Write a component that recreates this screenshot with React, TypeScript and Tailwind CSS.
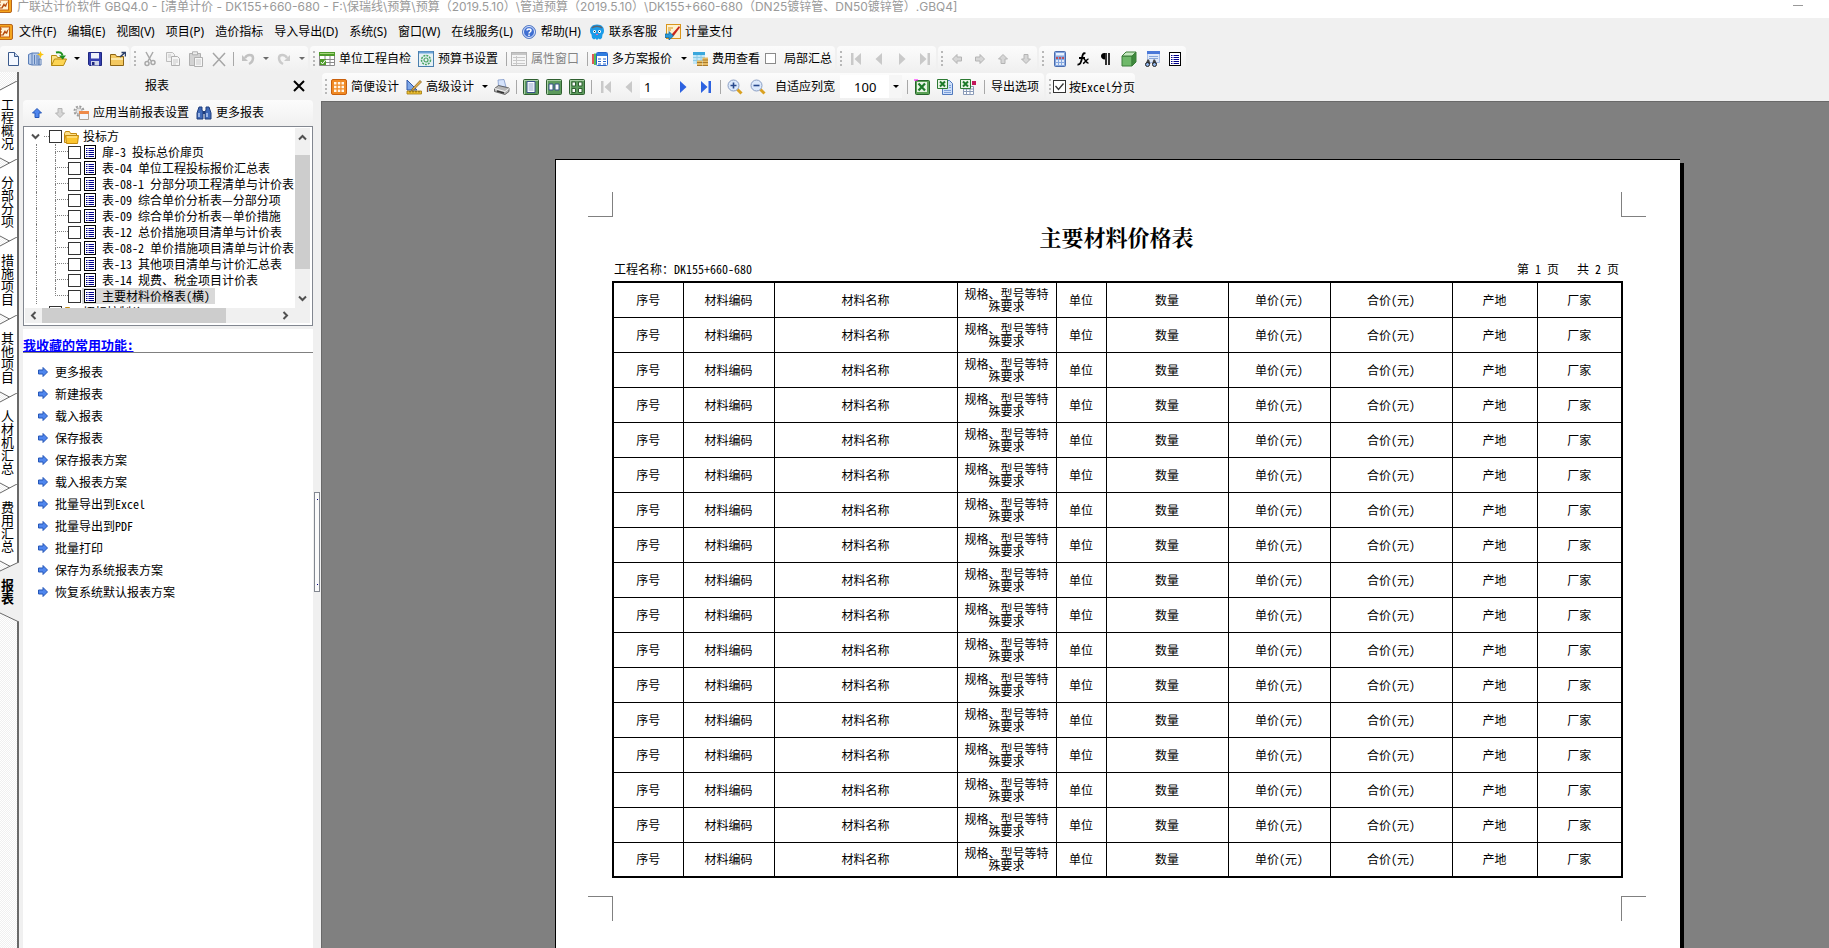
import React from 'react';

const MENUS = ['文件(F)', '编辑(E)', '视图(V)', '项目(P)', '造价指标', '导入导出(D)', '系统(S)', '窗口(W)', '在线服务(L)'];

const TABS = ['工程概况', '分部分项', '措施项目', '其他项目', '人材机汇总', '费用汇总', '报表'];

const REPORTS = [
  '扉-3 投标总价扉页',
  '表-04 单位工程投标报价汇总表',
  '表-08-1 分部分项工程清单与计价表',
  '表-09 综合单价分析表—分部分项',
  '表-09 综合单价分析表—单价措施',
  '表-12 总价措施项目清单与计价表',
  '表-08-2 单价措施项目清单与计价表',
  '表-13 其他项目清单与计价汇总表',
  '表-14 规费、税金项目计价表',
  '主要材料价格表(横)',
];

const FAVORITES = [
  '更多报表',
  '新建报表',
  '载入报表',
  '保存报表',
  '保存报表方案',
  '载入报表方案',
  '批量导出到Excel',
  '批量导出到PDF',
  '批量打印',
  '保存为系统报表方案',
  '恢复系统默认报表方案',
];

const COLUMNS = [
  { title: '序号', width: 70 },
  { title: '材料编码', width: 91 },
  { title: '材料名称', width: 183 },
  { title: '规格、型号等特殊要求', width: 99 },
  { title: '单位', width: 50 },
  { title: '数量', width: 122 },
  { title: '单价(元)', width: 102 },
  { title: '合价(元)', width: 122 },
  { title: '产地', width: 85 },
  { title: '厂家', width: 85 },
];

const BODY_ROWS = 16;

/* ---------- icons, all on a 16 x 16 grid ---------- */

const Svg: React.FC<{ children: React.ReactNode }> = ({ children }) => (
  <svg width="16" height="16" viewBox="0 0 16 16" className="block shrink-0" fill="none" aria-hidden="true">
    {children}
  </svg>
);

const AppIcon = () => (
  <Svg>
    <rect x="0.5" y="0.5" width="15" height="15" rx="1.5" fill="#f5a51d" stroke="#b5651d" />
    <rect x="3.500" y="3" width="9" height="10" fill="#fff3d6" stroke="#c8600a" />
    <path d="M5 11 8 6l1 2 3-4-2 6-2-1-2 3z" fill="#b5480a" />
    <path d="M2 5h3M2 8h3M2 11h3" stroke="#b5480a" />
  </Svg>
);

const NewIcon = () => (
  <Svg>
    <path d="M3.500 1.500h6l4 4v9h-10z" fill="#f4f8ff" stroke="#3b5a8c" />
    <path d="M9.500 1.500v4h4" fill="#c9d8f0" stroke="#3b5a8c" />
  </Svg>
);

const NewBookIcon = () => (
  <Svg>
    <path d="M.5 3.500 4 2h7v12H4L.5 13z" fill="#b7cbea" stroke="#5a7fb8" />
    <path d="M4 2v12M6.500 4v9M9 4v9M11 8h2v6h-2z" stroke="#5a7fb8" />
    <path d="m12.500 0 1 2.500L16 3.500l-2.500 1-1 3-1-3-2.500-1 2.500-1z" fill="#f9c413" />
  </Svg>
);

const OpenIcon = () => (
  <Svg>
    <path d="M.5 14.500v-10h5l1 2h6v2" fill="#fbe28a" stroke="#b58a12" />
    <path d="m.5 14.500 3-6.500h12l-3 6.500z" fill="#fdd554" stroke="#b58a12" />
    <path d="M5 1.500c4-1 6 .5 6.500 3" stroke="#1e8f1e" strokeWidth="2" />
    <path d="M8 4.500h7l-3.500 4z" fill="#1e8f1e" />
  </Svg>
);

const SaveIcon = () => (
  <Svg>
    <path d="M1.500 1.500h13v13h-12l-1-1z" fill="#3640b0" stroke="#1e2780" />
    <path d="M4 2h8v5.500H4z" fill="#eef2fb" />
    <path d="M4 10h8v4.500H4z" fill="#cfd5e8" />
    <path d="M5 11h2.500v3H5z" fill="#1e2780" />
  </Svg>
);

const CloseFolderIcon = () => (
  <Svg>
    <path d="M.5 14.500v-11h5l1 2h7v9z" fill="#f3c860" stroke="#8c6414" />
    <path d="M1 8h12" stroke="#fbe6a6" strokeWidth="2" />
    <path d="m10 6 5-4.500m-3.500 0h4v4" stroke="#2c4068" strokeWidth="1.500" />
  </Svg>
);

const CutIcon = () => (
  <Svg>
    <path d="m4 1 5 9M11 1 6 10" stroke="#a9a9a9" strokeWidth="1.500" />
    <circle cx="5" cy="12.500" r="2" stroke="#a9a9a9" strokeWidth="1.500" />
    <circle cx="11" cy="11.500" r="2" stroke="#a9a9a9" strokeWidth="1.500" />
  </Svg>
);

const CopyIcon = () => (
  <Svg>
    <path d="M1.500 1.500h6l2 2v7h-8z" fill="#f2f2f2" stroke="#bdbdbd" />
    <path d="M6.500 5.500h6l2 2v7h-8z" fill="#f6f6f6" stroke="#b0b0b0" />
    <path d="M8 9h5M8 11h5M8 13h3M3 4h3M3 6h3" stroke="#cacaca" />
  </Svg>
);

const PasteIcon = () => (
  <Svg>
    <path d="M1.500 2.500h11v12h-11z" fill="#d3d3d3" stroke="#b0b0b0" />
    <path d="M4.500.8h5v3h-5z" fill="#eee" stroke="#b0b0b0" />
    <path d="M6.500 6.500h8v9h-8z" fill="#f6f6f6" stroke="#b0b0b0" />
    <path d="M8 9h5M8 11h5M8 13h5" stroke="#cacaca" />
  </Svg>
);

const DeleteIcon = () => (
  <Svg>
    <path d="m2 2 12 13M14 2 2 15" stroke="#a6a6a6" strokeWidth="1.500" />
  </Svg>
);

const UndoIcon = () => (
  <Svg>
    <path d="M2 4v6h6z" fill="#c2c2c2" />
    <path d="M5 7c2-4 8-4 8 0 0 3-2 5-4 6" stroke="#c2c2c2" strokeWidth="2.500" />
  </Svg>
);

const RedoIcon = () => (
  <Svg>
    <path d="M14 4v6H8z" fill="#cbcbcb" />
    <path d="M11 7C9 3 3 3 3 7c0 3 2 5 4 6" stroke="#cbcbcb" strokeWidth="2.500" />
  </Svg>
);

const CheckSheetIcon = () => (
  <Svg>
    <path d="M.5 1.500h15v13H.5z" fill="#fff" stroke="#8a8a8a" />
    <path d="M0 1h16v4H0z" fill="#4d9a2a" />
    <path d="M1 2.500h14" stroke="#a5d67e" />
    <path d="M0 8.500h16M0 11.500h16M6 5v10M11 5v10" stroke="#8a8a8a" />
    <path d="M1 8h6v6H1z" fill="#4d9a2a" />
    <path d="m2 11 1.500 2L6.500 9" stroke="#fff" />
  </Svg>
);

const SettingsSheetIcon = () => (
  <Svg>
    <rect x=".5" y=".5" width="15" height="15" fill="#e6f1f5" stroke="#4a7fae" />
    <path d="M1 1.500h14" stroke="#6ba4d8" strokeWidth="2" />
    <circle cx="8" cy="9" r="4.500" stroke="#4aa564" strokeWidth="1.500" strokeDasharray="2 1" />
    <circle cx="8" cy="9" r="2" stroke="#4aa564" strokeWidth="1.200" />
  </Svg>
);

const PropertyIcon = () => (
  <Svg>
    <rect x=".5" y="1.500" width="15" height="13" fill="#f5f5f5" stroke="#b5b5b5" />
    <path d="M1 3h14" stroke="#c6c6c6" strokeWidth="2" />
    <path d="M2 6.500h12M2 9.500h12M2 12.500h12M5.500 5v9" stroke="#c9c9c9" />
  </Svg>
);

const PlansIcon = () => (
  <Svg>
    <path d="M1 3v10" stroke="#d22" strokeWidth="1.500" />
    <path d="M3 2.500v11.500" stroke="#2a2" strokeWidth="1.500" />
    <rect x="4.500" y="1.500" width="11" height="13" rx="1" fill="#fff" stroke="#2563c9" />
    <path d="M5 3.500h10" stroke="#2f7de0" strokeWidth="3" />
    <path d="M6 8h3m2 0h3M6 10.500h3m2 0h3M6 13h3m2 0h3" stroke="#2563c9" />
  </Svg>
);

const CostIcon = () => (
  <Svg>
    <path d="M1 1h12v12H1z" fill="#c2e7f7" />
    <path d="M1 1h12v3H1z" fill="#3aa7dc" />
    <path d="M1 6.500h12M1 9.500h12M5 4v9M9 4v9" stroke="#8fcbe6" />
    <path d="M5 9.500h5v5.500H5zM10.500 6.500H16V15h-5.500z" fill="#e8bb62" />
    <path d="M5 11.500h5M5 14.500h5M10.500 9h5.500M10.500 11.500H16M10.500 14.500H16" stroke="#a87a2c" />
  </Svg>
);

const HelpIcon = () => (
  <Svg>
    <circle cx="8" cy="8" r="6.500" fill="#3f6fd1" stroke="#5c7fc4" />
    <circle cx="8" cy="8" r="5.500" stroke="#dfe9ff" />
    <path d="M6 6.500C6 4.500 10 4.500 10 6.500 10 8 8 8 8 9.500M8 10.500V12" stroke="#fff" strokeWidth="1.500" />
  </Svg>
);

const ServiceIcon = () => (
  <Svg>
    <path d="M8 .5c5 0 7 3 7 6 0 2-.5 3-1.500 4L13 14l-2 1.500-1.500-1L8 16l-1.500-1.500-1.500 1L3 14l-.5-3.500C1.500 9.500 1 8.500 1 6.500c0-3 2-6 7-6z" fill="#1b9be8" />
    <path d="M3 4c2-2.500 8-2.500 10 0" stroke="#5d6670" strokeWidth="1.500" />
    <circle cx="5.500" cy="7.500" r="1.500" fill="#fff" />
    <circle cx="10.500" cy="7.500" r="1.500" fill="#fff" />
    <path d="M5.500 7v1M10.500 7v1" stroke="#222" />
    <path d="M7 10.500h2" stroke="#f6a" />
  </Svg>
);

const PayIcon = () => (
  <Svg>
    <rect x="1.500" y=".5" width="14" height="14" fill="#fdf1cf" stroke="#d9951b" />
    <path d="m14 2-7 8-1 3 3-1.500 6-8z" fill="#c8261a" />
    <path d="M3 4h5M3 6h3" stroke="#d9951b" />
    <path d="M0 10h4V7.500L8.500 12 4 16v-2.500H0z" fill="#2a9ad8" stroke="#0d5f94" strokeWidth=".7" />
  </Svg>
);

const FirstIcon = () => (
  <Svg>
    <path d="M3 2h2.500v12H3zM13 2v12L6.500 8z" fill="#c9c9c9" />
  </Svg>
);
const PrevIcon = () => (
  <Svg>
    <path d="M11 2v12L4.500 8z" fill="#c9c9c9" />
  </Svg>
);
const NextIcon: React.FC<{ on?: boolean }> = ({ on }) => (
  <Svg>
    <path d="M5 2v12l6.500-6z" fill={on ? '#2d62e0' : '#c9c9c9'} />
  </Svg>
);
const LastIcon: React.FC<{ on?: boolean }> = ({ on }) => (
  <Svg>
    <path d="M3 2v12l6.500-6zM10.500 2H13v12h-2.500z" fill={on ? '#2d62e0' : '#c9c9c9'} />
  </Svg>
);

// one arrow, turned to the four sides
const ArrowIcon: React.FC<{ turn?: number; fill?: string; edge?: string }> = ({ turn = 0, fill = '#d6d6d6', edge = '#b4b4b4' }) => (
  <Svg>
    <path
      d="M3.500 6h4.500V3.500l4.500 4.500L8 12.500V10H3.500z"
      fill={fill}
      stroke={edge}
      transform={`rotate(${turn} 8 8)`}
    />
  </Svg>
);

const CalculatorIcon = () => (
  <Svg>
    <rect x="2.500" y=".5" width="11" height="15" rx="1" fill="#86a8e0" stroke="#4a6cae" />
    <path d="M4 2h8v2.500H4z" fill="#e8f1ff" />
    <path d="M4 7h2m1 0h2m1 0h2" stroke="#d2322d" strokeWidth="1.500" />
    <path d="M4 10h2m1 0h2m1 0h2M4 13h2m1 0h2m1 0h2" stroke="#fff" strokeWidth="1.500" />
  </Svg>
);

const FxIcon = () => (
  <Svg>
    <path d="M10.500 2.500C8 1.500 7.500 4 7 7S5.500 14 2.500 13.500M4 7h6" stroke="#000" strokeWidth="1.800" />
    <path d="M8.500 8c2-.5 2.500 4.500 5 4M13.500 8c-2 0-3.500 4-5.500 4.500" stroke="#000" strokeWidth="1.500" />
  </Svg>
);

const ParagraphIcon = () => (
  <Svg>
    <path d="M13 2H6.500C4 2 3 3.500 3 5s1 3.500 4 3.500V2z" fill="#000" />
    <path d="M8 2v12M11 2v12" stroke="#000" strokeWidth="1.600" />
  </Svg>
);

const CubeIcon = () => (
  <Svg>
    <path d="M1 5h10v10H1z" fill="#6fb96a" stroke="#3c7f3a" />
    <path d="m1 5 4-4h10l-4 4z" fill="#c6e8c0" stroke="#3c7f3a" />
    <path d="m11 5 4-4v10l-4 4z" fill="#3f8a3d" stroke="#3c7f3a" />
  </Svg>
);

const SearchSheetIcon = () => (
  <Svg>
    <path d="M3.500.5h12v11h-12z" fill="#dfe9fa" stroke="#a9c0e8" />
    <path d="M3 0h13v3H3z" fill="#4b79d8" />
    <path d="M5 5.500h9M5 7.500h9" stroke="#88a7dc" />
    <path d="m1.500 13 2-4.500H5L6.500 13zM8 13l1.500-4.500H11l2 4.500z" fill="#444" />
    <circle cx="3.500" cy="13.500" r="2" fill="#8fb4e8" stroke="#222" />
    <circle cx="10.500" cy="13.500" r="2" fill="#8fb4e8" stroke="#222" />
  </Svg>
);

const ReportIcon = () => (
  <Svg>
    <rect x="2.500" y="1.500" width="11" height="13" fill="#fff" stroke="#000" />
    <path d="M4 4.500h1.500m1 0H12M4 6.500h1.500m1 0H12M4 8.500h1.500m1 0H12M4 10.500h1.500m1 0H12M4 12.500h1.500m1 0H12" stroke="#00008b" />
  </Svg>
);

const GridDesignIcon = () => (
  <Svg>
    <rect x=".5" y=".5" width="15" height="15" rx="1.500" fill="#f08a24" stroke="#c9600c" />
    <path d="M3 3h2.500v2.500H3zM6.800 3h2.500v2.500H6.800zM10.500 3H13v2.500h-2.500zM3 6.800h2.500v2.500H3zM6.800 6.800h2.500v2.500H6.800zM10.500 6.800H13v2.500h-2.500zM3 10.500h2.500V13H3zM6.800 10.500h2.500V13H6.800zM10.500 10.500H13V13h-2.500z" fill="#fff6e8" />
  </Svg>
);

const DesignIcon = () => (
  <Svg>
    <path d="M1 1v10h10z" fill="#7fa8e8" stroke="#2f57a8" />
    <path d="m6 10 8-8.500 1.500 1.500-8 8-2 .5z" fill="#e3b04c" stroke="#7a5412" strokeWidth=".7" />
    <path d="M1 12h14.500v3H1z" fill="#f1c232" stroke="#a07a10" strokeWidth=".8" />
    <path d="M4 12v1.500m3-1.500v1.500m3-1.500v1.500m3-1.500v1.500" stroke="#6b520a" />
  </Svg>
);

const PrinterIcon = () => (
  <Svg>
    <path d="M4.500 7 4 1l6-.5L12 8z" fill="#d5e3fb" stroke="#7f97c8" strokeWidth=".8" />
    <path d="m.5 9.500 4-3L15 9v3.500l-4 3-10.500-3z" fill="#b7b7b7" stroke="#4d4d4d" strokeWidth=".8" />
    <path d="m.5 9.500 10.500 3 4-3" stroke="#f2f2f2" />
    <path d="m3 12 7 2" stroke="#333" strokeWidth="1.500" />
  </Svg>
);

const PagesIcon: React.FC<{ pages: 1 | 2 | 4 }> = ({ pages }) => (
  <Svg>
    <rect x=".5" y=".5" width="15" height="15" rx="1" fill="#5c9a5c" stroke="#2f5f30" />
    <path d="M1 1.500h14M1.500 1v14" stroke="#a9d0a6" />
    {pages === 1 && (
      <>
        <path d="M4 2.500h8v11H4z" fill="#fff" stroke="#37508a" />
        <path d="M5.500 5h5M5.500 7h5M5.500 9h5M5.500 11h5" stroke="#8fa3cc" />
      </>
    )}
    {pages === 2 && <path d="M3 5h4v6H3zM9 5h4v6H9z" fill="#fff" stroke="#37508a" />}
    {pages === 4 && <path d="M3 3h3.500v4H3zM9.500 3H13v4H9.500zM3 9.500h3.500v4H3zM9.500 9.500H13v4H9.500z" fill="#fff" stroke="#2f5f30" />}
  </Svg>
);

const MagnifierIcon: React.FC<{ plus?: boolean }> = ({ plus }) => (
  <Svg>
    <path d="m10 10 4.500 4.500" stroke="#d9a020" strokeWidth="3" />
    <circle cx="6.500" cy="6.500" r="5.500" fill="#dce9fb" stroke="#8b9fc4" />
    <path d={plus ? 'M3.500 6.500h6M6.500 3.500v6' : 'M3.500 6.500h6'} stroke="#26488c" strokeWidth="1.600" />
  </Svg>
);

const ExcelIcon: React.FC<{ kind: 'book' | 'copy' | 'grid' }> = ({ kind }) => (
  <Svg>
    {kind === 'book' && (
      <>
        <rect x="1.500" y="1.500" width="14" height="14" rx="1" fill="#5aa155" stroke="#24642a" />
        <path d="M3 3h10v10H3z" fill="#e8f4e6" />
        <path d="m4.500 4.500 6.500 7m0-7-6.500 7" stroke="#1d7a2a" strokeWidth="2.200" />
        <path d="M0 1h4" stroke="#f0f" />
      </>
    )}
    {kind === 'copy' && (
      <>
        <path d="M5.500 1.500h7l3 3v11h-10z" fill="#cfe0fa" stroke="#4f78bd" />
        <path d="M7 13.500h7M7 11.500h7M12 8.500h2M12 6.500h2" stroke="#7ea0da" />
      </>
    )}
    {kind === 'grid' && (
      <>
        <path d="M3.500 7.500h10v8h-10z" fill="#fff" stroke="#8a9bb8" />
        <path d="M3.500 10h10M3.500 12.500h10M6.500 7.500v8M10 7.500v8" stroke="#8a9bb8" />
        <path d="M12 2h4v4h-4z" fill="#c2185b" />
      </>
    )}
    {kind !== 'book' && (
      <>
        <path d="M.5.5h10v9H.5z" fill="#e8f4e6" stroke="#2d7a33" />
        <path d="m3 2.500 5 5m0-5-5 5" stroke="#1d7a2a" strokeWidth="2" />
      </>
    )}
  </Svg>
);

const ApplyIcon = () => (
  <Svg>
    <circle cx="6" cy="6" r="4.500" stroke="#9a9a9a" strokeWidth="2" strokeDasharray="2 1.500" />
    <circle cx="6" cy="6" r="3" fill="#e4e4e4" stroke="#b5b5b5" />
    <path d="M6.500 6.500h9v8h-9z" fill="#f3f6fb" stroke="#b0a498" />
    <path d="M6 6h10v3H6z" fill="#ee8a4a" />
  </Svg>
);

const BinocularsIcon = () => (
  <Svg>
    <path d="M3 2h3v3l1 2v7H1V8z" fill="#3f69b8" stroke="#1f3c7a" />
    <path d="M10 2h3l2 6v6H9V7l1-2z" fill="#3f69b8" stroke="#1f3c7a" />
    <path d="M7 6h2v3H7z" fill="#1f3c7a" />
    <path d="M3 8v4M11 8v4" stroke="#b6cdf5" strokeWidth="1.500" />
  </Svg>
);

const FolderIcon = () => (
  <Svg>
    <path d="M1.500 14.500v-9l1-2h4l1 2h6v9z" fill="#fde08a" stroke="#c48a0e" />
    <path d="m3.500 15.500-1-8h13l-1 8z" fill="#fcc52e" stroke="#c48a0e" />
    <path d="M4 9h10" stroke="#fff0b8" />
  </Svg>
);

const Chevron: React.FC<{ turn?: number }> = ({ turn = 0 }) => (
  <svg width="9" height="9" viewBox="0 0 9 9" className="block shrink-0" fill="none" aria-hidden="true">
    <path d="m1 2.500 3.500 3.500L8 2.500" stroke="#505050" strokeWidth="2" transform={`rotate(${turn} 4.500 4.500)`} />
  </svg>
);

/* ---------- toolbar parts ---------- */

const Band: React.FC<{ children: React.ReactNode; grip?: boolean }> = ({ children, grip = true }) => (
  <div className="flex h-full items-center rounded-sm bg-gradient-to-b from-[#fcfcfc] to-[#f0f0f0]">
    {grip && (
      <span className="flex w-[7px] shrink-0 justify-center">
        <span className="h-[15px] border-l-2 border-dotted border-[#b8b8b8]" />
      </span>
    )}
    {children}
  </div>
);

const IconButton: React.FC<{ label: string; disabled?: boolean; children: React.ReactNode }> = ({ label, disabled, children }) => (
  <button type="button" aria-label={label} disabled={disabled} className="flex h-[22px] w-[23px] shrink-0 items-center justify-center">
    {children}
  </button>
);

const TextButton: React.FC<{ icon?: React.ReactNode; disabled?: boolean; children: React.ReactNode }> = ({ icon, disabled, children }) => (
  <button type="button" disabled={disabled} className="flex h-[22px] shrink-0 items-center gap-1 pr-[5px] pl-[2px] whitespace-nowrap disabled:text-[#838383]">
    {icon}
    {children}
  </button>
);

const Caret: React.FC<{ label: string; off?: boolean }> = ({ label, off }) => (
  <button type="button" aria-label={label} className="flex h-[22px] w-[13px] shrink-0 items-center justify-center">
    <svg width="6" height="3" viewBox="0 0 6 3" aria-hidden="true">
      <path d="M0 0h6L3 3z" fill={off ? '#6b6b6b' : '#000'} />
    </svg>
  </button>
);

const Separator = () => (
  <span className="flex w-[6px] shrink-0 justify-center">
    <span className="h-[14px] w-px bg-[#a8a8a8]" />
  </span>
);

const TickBox: React.FC<{ id: string; label?: string; checked?: boolean; className: string }> = ({ id, label, checked, className }) => (
  <span className="relative flex shrink-0">
    <input id={id} type="checkbox" aria-label={label} defaultChecked={checked} className={`peer appearance-none border bg-white ${className}`} />
    <svg viewBox="0 0 13 13" className="pointer-events-none absolute inset-0 hidden peer-checked:block" fill="none" aria-hidden="true">
      <path d="m2.500 6 3 3.500 5-6" stroke="#333" strokeWidth="1.300" />
    </svg>
  </span>
);

const MainToolbar = () => (
  <div className="mb-px flex h-[25px] shrink-0 gap-[2px] overflow-hidden">
    <Band grip={false}>
      <span className="w-px" />
      <IconButton label="新建"><NewIcon /></IconButton>
      <IconButton label="新建项目"><NewBookIcon /></IconButton>
      <IconButton label="打开"><OpenIcon /></IconButton>
      <Caret label="打开选项" />
      <IconButton label="保存"><SaveIcon /></IconButton>
      <IconButton label="关闭"><CloseFolderIcon /></IconButton>
    </Band>
    <Band>
      <IconButton label="剪切" disabled><CutIcon /></IconButton>
      <IconButton label="复制" disabled><CopyIcon /></IconButton>
      <IconButton label="粘贴" disabled><PasteIcon /></IconButton>
      <IconButton label="删除" disabled><DeleteIcon /></IconButton>
      <Separator />
      <IconButton label="撤销" disabled><UndoIcon /></IconButton>
      <Caret label="撤销列表" off />
      <IconButton label="恢复" disabled><RedoIcon /></IconButton>
      <Caret label="恢复列表" off />
    </Band>
    <Band>
      <TextButton icon={<CheckSheetIcon />}>单位工程自检</TextButton>
      <TextButton icon={<SettingsSheetIcon />}>预算书设置</TextButton>
      <Separator />
      <TextButton icon={<PropertyIcon />} disabled>属性窗口</TextButton>
      <Separator />
      <TextButton icon={<PlansIcon />}>多方案报价</TextButton>
      <Caret label="多方案报价选项" />
      <TextButton icon={<CostIcon />}>费用查看</TextButton>
      <TickBox id="partial" className="h-[11px] w-[11px] border-[#8a8a8a]" />
      <label htmlFor="partial" className="pr-[3px] pl-2 whitespace-nowrap">局部汇总</label>
    </Band>
    <Band>
      <IconButton label="首条" disabled><FirstIcon /></IconButton>
      <IconButton label="上一条" disabled><PrevIcon /></IconButton>
      <IconButton label="下一条" disabled><NextIcon /></IconButton>
      <IconButton label="末条" disabled><LastIcon /></IconButton>
    </Band>
    <Band>
      <IconButton label="左移" disabled><ArrowIcon turn={180} /></IconButton>
      <IconButton label="右移" disabled><ArrowIcon /></IconButton>
      <IconButton label="上移" disabled><ArrowIcon turn={270} /></IconButton>
      <IconButton label="下移" disabled><ArrowIcon turn={90} /></IconButton>
    </Band>
    <Band>
      <span className="w-[2px]" />
      <IconButton label="计算器"><CalculatorIcon /></IconButton>
      <IconButton label="函数"><FxIcon /></IconButton>
      <IconButton label="特殊符号"><ParagraphIcon /></IconButton>
      <IconButton label="图元公式"><CubeIcon /></IconButton>
      <IconButton label="查找"><SearchSheetIcon /></IconButton>
      <IconButton label="报表"><ReportIcon /></IconButton>
    </Band>
  </div>
);

const ReportToolbar = () => (
  <div className="my-px flex h-[27px] shrink-0 gap-[2px] overflow-hidden pl-px">
    <Band>
      <TextButton icon={<GridDesignIcon />}>简便设计</TextButton>
      <TextButton icon={<DesignIcon />}>高级设计</TextButton>
      <span className="-mx-px"><Caret label="高级设计选项" /></span>
      <IconButton label="打印"><PrinterIcon /></IconButton>
      <Separator />
      <IconButton label="单页"><PagesIcon pages={1} /></IconButton>
      <IconButton label="双页"><PagesIcon pages={2} /></IconButton>
      <IconButton label="四页"><PagesIcon pages={4} /></IconButton>
      <Separator />
      <IconButton label="首页" disabled><FirstIcon /></IconButton>
      <IconButton label="上一页" disabled><PrevIcon /></IconButton>
      <input type="text" aria-label="页码" defaultValue="1" className="mr-px h-[23px] w-[30px] bg-white pl-1 text-[13px] outline-none" />
      <IconButton label="下一页"><NextIcon on /></IconButton>
      <IconButton label="末页"><LastIcon on /></IconButton>
      <Separator />
      <IconButton label="放大"><MagnifierIcon plus /></IconButton>
      <IconButton label="缩小"><MagnifierIcon /></IconButton>
      <span className="w-1" />
      <TextButton>自适应列宽</TextButton>
      <span className="flex h-[23px] w-[62px] items-center bg-white">
        <select aria-label="缩放比例" defaultValue="100" className="h-full w-[49px] appearance-none pl-[14px] text-[13px] outline-none">
          <option>100</option>
          <option>75</option>
          <option>50</option>
        </select>
        <span className="flex h-full bg-[#f6f6f6]">
          <Caret label="缩放列表" />
        </span>
      </span>
      <span className="w-[2px]" />
      <Separator />
      <IconButton label="导出到Excel"><ExcelIcon kind="book" /></IconButton>
      <IconButton label="导出到Excel文件"><ExcelIcon kind="copy" /></IconButton>
      <IconButton label="导出到已有Excel"><ExcelIcon kind="grid" /></IconButton>
      <span className="w-[2px]" />
      <Separator />
      <span className="w-[2px]" />
      <TextButton>导出选项</TextButton>
    </Band>
    <Band>
      <TickBox id="by-excel" checked className="h-[13px] w-[13px] border-[#333]" />
      <label htmlFor="by-excel" className="pl-[3px] font-['Noto_Sans_Mono_CJK_SC','Noto_Sans_CJK_SC',monospace] whitespace-nowrap">按Excel分页</label>
    </Band>
  </div>
);

/* ---------- left side ---------- */

// vertical tab strip, each tab cut off at a slant on both ends
const TabStrip = () => (
  <nav className="relative w-[19px] shrink-0 bg-[repeating-conic-gradient(#f0f0f0_0_25%,#ffffff_0_50%)] bg-[length:2px_2px] pt-[9px]">
    <span className="absolute inset-y-0 right-0 w-[2px] bg-[#696969]" />
    {TABS.map((tab) => {
      const active = tab === '报表';
      const height = tab.length * 13 + 34;
      const edge = active ? 19 : 17;
      return (
        <button key={tab} type="button" className="relative -mb-2 block w-full" style={{ height }}>
          <svg width="19" height={height} className="absolute inset-0" fill="none" aria-hidden="true">
            <path d={`M0 9 ${edge} 0V${height}L0 ${height - 9}`} fill={active ? '#f0f0f0' : '#fff'} />
            <path d={`M0 9 ${edge} 0M0 ${height - 9} ${edge} ${height}`} stroke="#696969" />
          </svg>
          <span className={`relative ml-[1px] block w-[13px] text-[13px] leading-[13px] break-all ${active ? 'font-bold' : ''}`}>{tab}</span>
        </button>
      );
    })}
  </nav>
);

const TreeRow: React.FC<{ name: string; last: boolean; index: number }> = ({ name, last, index }) => (
  <li className="flex h-4 items-center whitespace-nowrap">
    <span className="ml-[11px] h-full w-[19px] shrink-0 border-l border-dotted border-[#808080]" />
    <span className="flex h-full w-[13px] shrink-0 flex-col">
      <span className="h-1/2 border-b border-l border-dotted border-[#808080]" />
      {!last && <span className="h-1/2 border-l border-dotted border-[#808080]" />}
    </span>
    <TickBox id={`report-${index}`} className="h-[13px] w-[13px] border-[#333]" />
    <label htmlFor={`report-${index}`} className={`ml-px flex h-4 items-center gap-1 pr-[5px] ${last ? 'bg-[#d9d9d9]' : ''}`}>
      <ReportIcon />
      <span className="leading-4 whitespace-pre">{name}</span>
    </label>
  </li>
);

const ReportTree = () => (
  <div className="flex h-[200px] shrink-0 flex-col border border-[#828790] bg-white p-px pr-[2px] pb-[2px]">
    <div className="flex min-h-0 flex-1">
      <ul className="min-w-0 flex-1 overflow-hidden">
        <li className="flex h-4 items-center">
          <span className="ml-[6px]"><Chevron /></span>
          <span className="ml-1 w-[5px] border-t border-dotted border-[#808080]" />
          <TickBox id="bidder" className="h-[13px] w-[13px] border-[#333]" />
          <label htmlFor="bidder" className="ml-px flex items-center gap-1 leading-4"><FolderIcon />投标方</label>
        </li>
        {REPORTS.map((name, i) => (
          <TreeRow key={name} name={name} index={i} last={i === REPORTS.length - 1} />
        ))}
        <li className="flex h-4 items-center">
          <span className="ml-6" />
          <TickBox id="tender" className="h-[13px] w-[13px] border-[#333]" />
          <label htmlFor="tender" className="ml-px flex items-center gap-1 leading-4"><FolderIcon />招标控制价</label>
        </li>
      </ul>
      <div className="flex w-[15px] shrink-0 flex-col items-center bg-[#f0f0f0] pt-[5px] pb-[5px]">
        <Chevron turn={180} />
        <span className="mt-[13px] h-[114px] w-full bg-[#cdcdcd]" />
        <span className="mt-auto"><Chevron /></span>
      </div>
    </div>
    <div className="flex h-[15px] shrink-0 items-center bg-[#f0f0f0] pr-[20px] pl-1">
      <Chevron turn={90} />
      <span className="ml-1 h-full w-[184px] bg-[#cdcdcd]" />
      <span className="ml-auto"><Chevron turn={270} /></span>
    </div>
  </div>
);

const Sidebar = () => (
  <aside className="flex w-[302px] shrink-0 pl-1">
    <div className="flex w-[290px] flex-col">
      <div className="flex h-7 shrink-0 items-center pr-[6px]">
        <h2 className="flex-1 text-center">报表</h2>
        <button type="button" aria-label="关闭" className="flex h-4 w-4 items-center justify-center">
          <svg width="12" height="12" viewBox="0 0 12 12" aria-hidden="true">
            <path d="m1 1 10 10M11 1 1 11" stroke="#000" strokeWidth="2" />
          </svg>
        </button>
      </div>
      <div className="h-[26px] shrink-0">
        <Band grip={false}>
          <span className="w-[2px]" />
          <IconButton label="上移报表"><ArrowIcon turn={270} fill="#4f86ee" edge="#2456b8" /></IconButton>
          <IconButton label="下移报表" disabled><ArrowIcon turn={90} /></IconButton>
          <TextButton icon={<ApplyIcon />}>应用当前报表设置</TextButton>
          <TextButton icon={<BinocularsIcon />}>更多报表</TextButton>
        </Band>
      </div>
      <div className="flex min-h-0 flex-1 flex-col font-['Noto_Sans_Mono_CJK_SC','Noto_Sans_CJK_SC',monospace]">
        <ReportTree />
        <div className="mt-[3px] flex-1 bg-white">
          <h3 className="border-b border-[#808080] pt-[9px] text-[13px] leading-[14px] font-bold text-[#0000ff] underline">我收藏的常用功能:</h3>
          <ul className="pt-2">
            {FAVORITES.map((item) => (
              <li key={item}>
                <a href="#" className="flex h-[22px] items-center gap-1 pl-[12px]">
                  <ArrowIcon fill="#4f86ee" edge="#2456b8" />
                  <span className="leading-4">{item}</span>
                </a>
              </li>
            ))}
          </ul>
        </div>
      </div>
    </div>
    <button type="button" aria-label="折叠面板" className="mt-[420px] ml-px flex h-[100px] w-[6px] flex-col items-center justify-between border border-[#828790] bg-[#fafafa] py-[6px]">
      <span className="h-px w-px bg-[#000080]" />
      <span className="h-px w-px bg-[#000080]" />
    </button>
  </aside>
);

/* ---------- report page ---------- */

const MARGIN = 'h-[25px] w-[25px] border-[#808080]';

const ReportPage = () => (
  <div className="flex w-[1125px] shrink-0 flex-col border-t border-l border-black bg-white pt-8 pr-[34px] pl-8 font-['Noto_Sans_Mono_CJK_SC','Noto_Sans_CJK_SC',monospace] shadow-[4px_4px_0_#000]">
    <div className="flex justify-between">
      <span className={`${MARGIN} border-r border-b`} />
      <span className={`${MARGIN} border-b border-l`} />
    </div>
    <div className="pr-[25px] pl-6">
      <h1 className="mt-[6px] text-center font-['Noto_Serif_CJK_SC','Noto_Sans_CJK_SC',serif] text-[22px] leading-7 font-bold">主要材料价格表</h1>
      <div className="mt-[10px] flex justify-between px-[2px] leading-4 whitespace-pre">
        <span>工程名称：DK155+660-680</span>
        <span>第 1 页   共 2 页</span>
      </div>
      <table className="mt-1 w-full table-fixed border-collapse border-2 border-black text-center leading-3">
        <colgroup>
          {COLUMNS.map((col) => (
            <col key={col.title} style={{ width: col.width }} />
          ))}
        </colgroup>
        <thead>
          <tr className="h-[35px]">
            {COLUMNS.map((col) => (
              <th key={col.title} className="border border-black px-1 font-normal">{col.title}</th>
            ))}
          </tr>
        </thead>
        <tbody>
          {Array.from({ length: BODY_ROWS }, (_, row) => (
            <tr key={row} className="h-[35px]">
              {COLUMNS.map((col) => (
                <td key={col.title} className="border border-black px-1">{col.title}</td>
              ))}
            </tr>
          ))}
        </tbody>
      </table>
    </div>
    <div className="mt-[18px] flex justify-between">
      <span className={`${MARGIN} border-t border-r`} />
      <span className={`${MARGIN} border-t border-l`} />
    </div>
  </div>
);

export default function App() {
  return (
    <div className="flex h-screen flex-col overflow-hidden bg-[#f0f0f0] font-['Noto_Sans','Noto_Sans_CJK_SC',sans-serif] text-[12px] leading-4 text-black">
      <header className="flex h-[18px] shrink-0 items-start overflow-hidden bg-white pr-[26px] text-[#9a9a9a]">
        <span className="-mt-[3px] -ml-1"><AppIcon /></span>
        <h1 className="ml-[5px] flex-1 font-['Inter','Noto_Sans_CJK_SC',sans-serif] leading-[14px] whitespace-nowrap">
          广联达计价软件 GBQ4.0 - [清单计价 - DK155+660-680 - F:\保瑞线\预算\预算（2019.5.10）\管道预算（2019.5.10）\DK155+660-680（DN25镀锌管、DN50镀锌管）.GBQ4]
        </h1>
        <button type="button" aria-label="最小化" className="mt-[5px] h-px w-[10px] bg-[#999]" />
      </header>

      <nav className="flex h-7 shrink-0 items-center gap-[11px] overflow-hidden whitespace-nowrap">
        <span className="-mr-[5px] -ml-[3px]"><AppIcon /></span>
        {MENUS.map((menu) => (
          <button key={menu} type="button">{menu}</button>
        ))}
        <button type="button" className="-ml-[3px] flex items-center gap-1"><HelpIcon />帮助(H)</button>
        <button type="button" className="-ml-[3px] flex items-center gap-1"><ServiceIcon />联系客服</button>
        <button type="button" className="-ml-[3px] flex items-center gap-1"><PayIcon />计量支付</button>
      </nav>

      <MainToolbar />

      <div className="flex min-h-0 flex-1">
        <TabStrip />
        <Sidebar />
        <main className="flex min-w-0 flex-1 flex-col">
          <ReportToolbar />
          <div className="flex min-h-0 flex-1 overflow-hidden border-t border-l border-[#696969] bg-[#808080] pt-[57px] pl-[233px]">
            <ReportPage />
          </div>
        </main>
      </div>
    </div>
  );
}
